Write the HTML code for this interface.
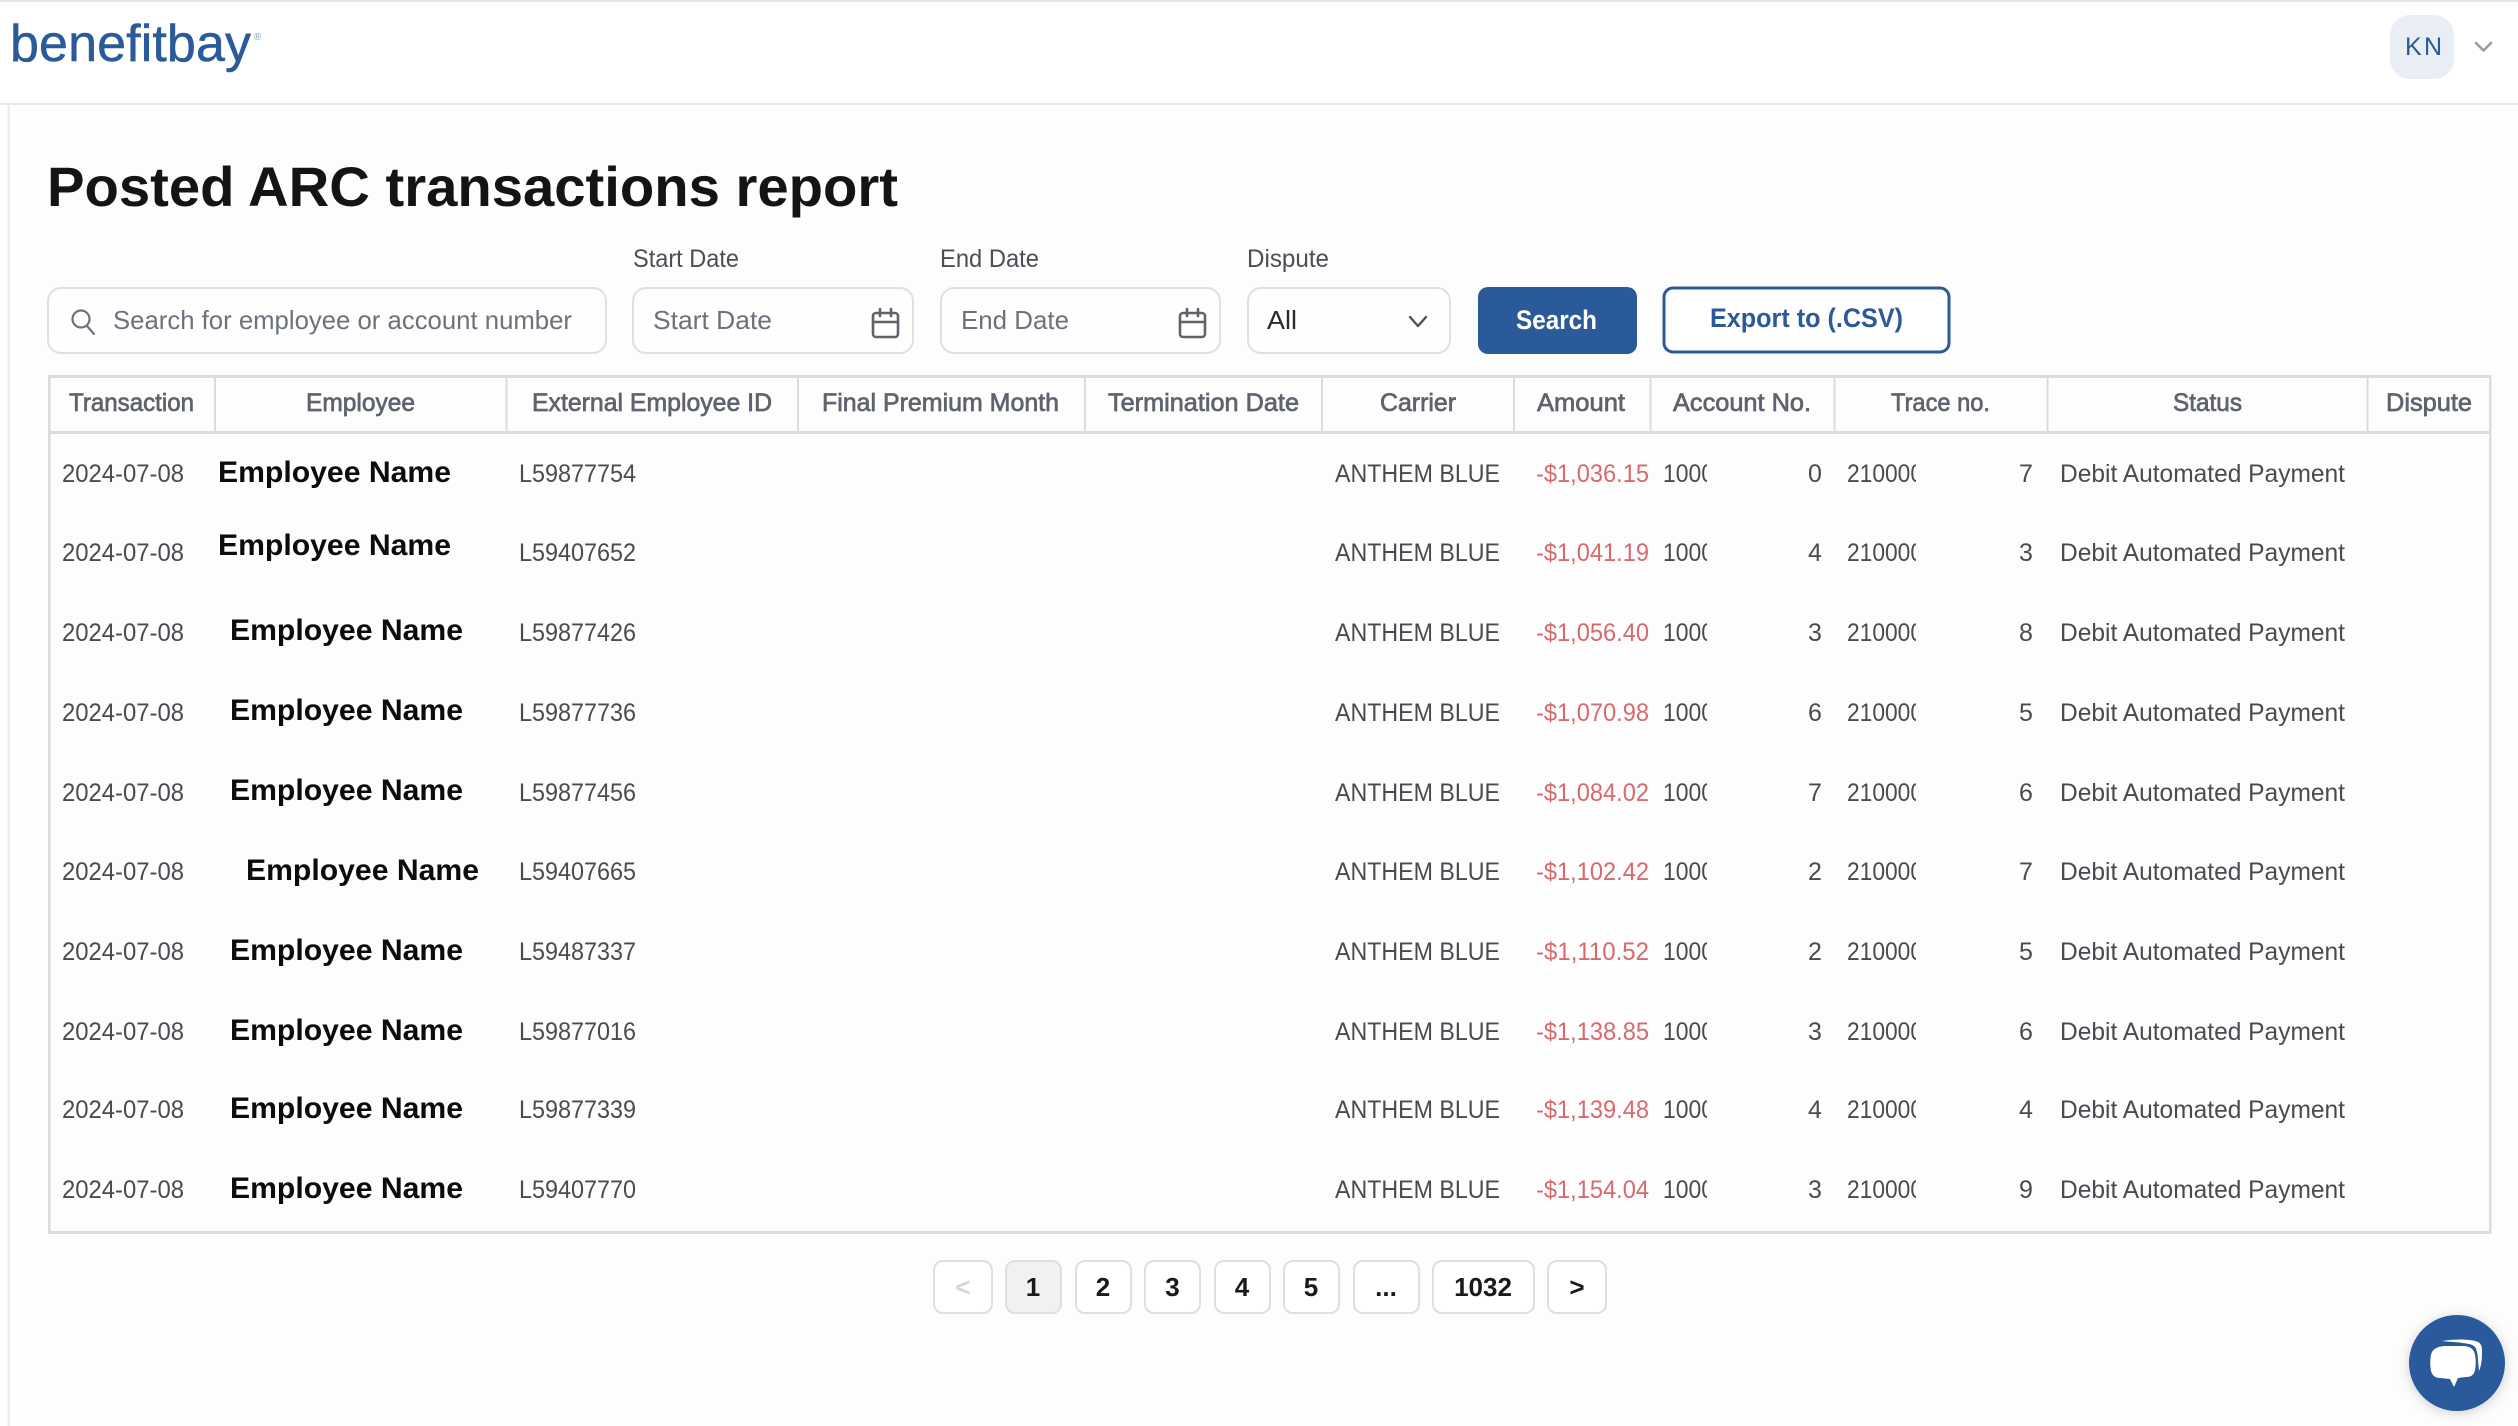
<!DOCTYPE html>
<html lang="en"><head><meta charset="utf-8"><title>Posted ARC transactions report</title>
<style>
html,body{margin:0;padding:0;background:#fdfdfd;width:2518px;height:1426px;overflow:hidden}
svg{display:block;position:absolute;left:0;top:0}
text{font-family:"Liberation Sans",sans-serif;white-space:pre}
.h{font-size:25px;fill:#5f636e;stroke:#5f636e;stroke-width:.7px}
.d{font-size:25px;fill:#4a4b50}
.r{font-size:25px;fill:#d8696d}
.n{font-size:30px;font-weight:700;fill:#0c0c0e}
.l{font-size:25px;fill:#4c4e55}
.p{font-size:26px;fill:#6c717c}
.g{font-size:26px;font-weight:700;fill:#1a1a1c}
.pg{fill:#fff;stroke:#dfdfdf;stroke-width:2}
.i{fill:none;stroke:#5f636b;stroke-width:2.6;stroke-linecap:round;stroke-linejoin:round}
.box{fill:#fefefe;stroke:#e0e0e0;stroke-width:2}
</style></head><body>
<svg width="2518" height="1426" viewBox="0 0 2518 1426" xmlns="http://www.w3.org/2000/svg">
<defs><filter id="s" x="-30%" y="-30%" width="160%" height="160%"><feDropShadow dx="0" dy="2" stdDeviation="6" flood-color="#000" flood-opacity=".18"/></filter></defs>
<rect width="2518" height="1426" fill="#fdfdfd"/>
<rect width="2518" height="104" fill="#fff"/>
<rect width="2518" height="2" fill="#e6e6ea"/>
<rect y="103" width="2518" height="2" fill="#e8e8ee"/>
<rect y="105" width="8" height="1321" fill="#fff"/>
<rect x="7.500" y="105" width="2" height="1321" fill="#e8e8ee"/>

<!-- logo -->
<text x="10" y="61" font-size="52" fill="#2b5a9b" stroke="#2b5a9b" stroke-width=".5" textLength="241" lengthAdjust="spacing" style="font-variant-ligatures:none">benefitbay</text>
<text x="254" y="40" font-size="10" fill="#7f9cc4">®</text>

<!-- avatar -->
<rect x="2390" y="15" width="64" height="64" rx="20" fill="#e8eef3"/>
<text x="2405" y="55" font-size="25" fill="#2b5a9b" textLength="37">KN</text>
<path d="M2476 43l7.500 7.500 7.500-7.500" fill="none" stroke="#9a9ca5" stroke-width="2.600" stroke-linecap="round" stroke-linejoin="round"/>

<!-- title -->
<text x="47" y="206" font-size="56" font-weight="700" fill="#141416" textLength="851" lengthAdjust="spacingAndGlyphs">Posted ARC transactions report</text>

<!-- labels -->
<text class="l" x="633" y="267" textLength="106" lengthAdjust="spacingAndGlyphs">Start Date</text>
<text class="l" x="940" y="267" textLength="99" lengthAdjust="spacingAndGlyphs">End Date</text>
<text class="l" x="1247" y="267" textLength="82" lengthAdjust="spacingAndGlyphs">Dispute</text>

<!-- inputs -->
<rect class="box" x="48" y="288" width="558" height="65" rx="13"/>
<circle cx="81" cy="319" r="8.500" fill="none" stroke="#6c717c" stroke-width="2.200"/>
<path d="M87 326l7 8" fill="none" stroke="#6c717c" stroke-width="2.200" stroke-linecap="round"/>
<text class="p" x="113" y="329" textLength="459" lengthAdjust="spacingAndGlyphs">Search for employee or account number</text>

<rect class="box" x="633" y="288" width="280" height="65" rx="13"/>
<text class="p" x="653" y="329" textLength="119" lengthAdjust="spacingAndGlyphs">Start Date</text>
<g class="i"><rect x="873" y="313" width="25" height="24" rx="3"/><path d="M873 322h25M880 309v7M891 309v7"/></g>

<rect class="box" x="941" y="288" width="279" height="65" rx="13"/>
<text class="p" x="961" y="329" textLength="108" lengthAdjust="spacingAndGlyphs">End Date</text>
<g class="i"><rect x="1180" y="313" width="25" height="24" rx="3"/><path d="M1180 322h25M1187 309v7M1198 309v7"/></g>

<rect class="box" x="1248" y="288" width="202" height="65" rx="13"/>
<text x="1267" y="329" font-size="26" fill="#2a2a2e" textLength="30" lengthAdjust="spacingAndGlyphs">All</text>
<path d="M1410 317l8 9 8-9" fill="none" stroke="#4f5259" stroke-width="2.400" stroke-linecap="round" stroke-linejoin="round"/>

<!-- buttons -->
<rect x="1478" y="287" width="159" height="67" rx="10" fill="#2b5a9b"/>
<text x="1516" y="329" font-size="27" font-weight="700" fill="#fff" textLength="81" lengthAdjust="spacingAndGlyphs">Search</text>
<rect x="1664" y="288" width="285" height="64" rx="9" fill="#fff" stroke="#2b5a9b" stroke-width="3"/>
<text x="1710" y="327" font-size="27" font-weight="700" fill="#2b5a9b" textLength="193" lengthAdjust="spacingAndGlyphs">Export to (.CSV)</text>

<!-- table frame -->
<rect x="48" y="375" width="2443" height="3" fill="#dcdcdc"/>
<rect x="48" y="431" width="2443" height="3" fill="#dcdcdc"/>
<rect x="48" y="1231" width="2443" height="3" fill="#dcdcdc"/>
<rect x="48" y="375" width="2.500" height="859" fill="#dcdcdc"/>
<rect x="2489" y="375" width="2.500" height="859" fill="#dcdcdc"/>
<g fill="#dcdcdc">
<rect x="214" y="375" width="2" height="58"/><rect x="505.500" y="375" width="2" height="58"/><rect x="797" y="375" width="2" height="58"/><rect x="1084" y="375" width="2" height="58"/><rect x="1321" y="375" width="2" height="58"/><rect x="1513" y="375" width="2" height="58"/><rect x="1649.500" y="375" width="2" height="58"/><rect x="1833.500" y="375" width="2" height="58"/><rect x="2046.500" y="375" width="2" height="58"/><rect x="2366.500" y="375" width="2" height="58"/>
</g>

<!-- headers -->
<text class="h" x="69" y="411" textLength="125" lengthAdjust="spacingAndGlyphs">Transaction</text>
<text class="h" x="306" y="411" textLength="109" lengthAdjust="spacingAndGlyphs">Employee</text>
<text class="h" x="532" y="411" textLength="240" lengthAdjust="spacingAndGlyphs">External Employee ID</text>
<text class="h" x="822" y="411" textLength="237" lengthAdjust="spacingAndGlyphs">Final Premium Month</text>
<text class="h" x="1108" y="411" textLength="191" lengthAdjust="spacingAndGlyphs">Termination Date</text>
<text class="h" x="1380" y="411" textLength="76" lengthAdjust="spacingAndGlyphs">Carrier</text>
<text class="h" x="1537" y="411" textLength="88" lengthAdjust="spacingAndGlyphs">Amount</text>
<text class="h" x="1673" y="411" textLength="138" lengthAdjust="spacingAndGlyphs">Account No.</text>
<text class="h" x="1891" y="411" textLength="99" lengthAdjust="spacingAndGlyphs">Trace no.</text>
<text class="h" x="2173" y="411" textLength="69" lengthAdjust="spacingAndGlyphs">Status</text>
<text class="h" x="2386" y="411" textLength="86" lengthAdjust="spacingAndGlyphs">Dispute</text>

<!-- row 1 -->
<g>
<text class="d" x="62" y="482" textLength="122" lengthAdjust="spacingAndGlyphs">2024-07-08</text>
<text class="n" x="218" y="482" textLength="233" lengthAdjust="spacingAndGlyphs">Employee Name</text>
<text class="d" x="519" y="482" textLength="117" lengthAdjust="spacingAndGlyphs">L59877754</text>
<text class="d" x="1335" y="482" textLength="165" lengthAdjust="spacingAndGlyphs">ANTHEM BLUE</text>
<text class="r" x="1536" y="482" textLength="113" lengthAdjust="spacingAndGlyphs">-$1,036.15</text>
<text class="d" x="1663" y="482" textLength="51" lengthAdjust="spacingAndGlyphs">1000</text><rect x="1707" y="455" width="90" height="36" fill="#fdfdfd"/><text class="d" x="1808" y="482">0</text>
<text class="d" x="1847" y="482" textLength="76" lengthAdjust="spacingAndGlyphs">210000</text><rect x="1916" y="455" width="90" height="36" fill="#fdfdfd"/><text class="d" x="2019" y="482">7</text>
<text class="d" x="2060" y="482" textLength="285" lengthAdjust="spacingAndGlyphs">Debit Automated Payment</text>
</g>
<!-- row 2 -->
<g>
<text class="d" x="62" y="561" textLength="122" lengthAdjust="spacingAndGlyphs">2024-07-08</text>
<text class="n" x="218" y="555" textLength="233" lengthAdjust="spacingAndGlyphs">Employee Name</text>
<text class="d" x="519" y="561" textLength="117" lengthAdjust="spacingAndGlyphs">L59407652</text>
<text class="d" x="1335" y="561" textLength="165" lengthAdjust="spacingAndGlyphs">ANTHEM BLUE</text>
<text class="r" x="1536" y="561" textLength="113" lengthAdjust="spacingAndGlyphs">-$1,041.19</text>
<text class="d" x="1663" y="561" textLength="51" lengthAdjust="spacingAndGlyphs">1000</text><rect x="1707" y="534" width="90" height="36" fill="#fdfdfd"/><text class="d" x="1808" y="561">4</text>
<text class="d" x="1847" y="561" textLength="76" lengthAdjust="spacingAndGlyphs">210000</text><rect x="1916" y="534" width="90" height="36" fill="#fdfdfd"/><text class="d" x="2019" y="561">3</text>
<text class="d" x="2060" y="561" textLength="285" lengthAdjust="spacingAndGlyphs">Debit Automated Payment</text>
</g>
<!-- row 3 -->
<g>
<text class="d" x="62" y="641" textLength="122" lengthAdjust="spacingAndGlyphs">2024-07-08</text>
<text class="n" x="230" y="640" textLength="233" lengthAdjust="spacingAndGlyphs">Employee Name</text>
<text class="d" x="519" y="641" textLength="117" lengthAdjust="spacingAndGlyphs">L59877426</text>
<text class="d" x="1335" y="641" textLength="165" lengthAdjust="spacingAndGlyphs">ANTHEM BLUE</text>
<text class="r" x="1536" y="641" textLength="113" lengthAdjust="spacingAndGlyphs">-$1,056.40</text>
<text class="d" x="1663" y="641" textLength="51" lengthAdjust="spacingAndGlyphs">1000</text><rect x="1707" y="614" width="90" height="36" fill="#fdfdfd"/><text class="d" x="1808" y="641">3</text>
<text class="d" x="1847" y="641" textLength="76" lengthAdjust="spacingAndGlyphs">210000</text><rect x="1916" y="614" width="90" height="36" fill="#fdfdfd"/><text class="d" x="2019" y="641">8</text>
<text class="d" x="2060" y="641" textLength="285" lengthAdjust="spacingAndGlyphs">Debit Automated Payment</text>
</g>
<!-- row 4 -->
<g>
<text class="d" x="62" y="721" textLength="122" lengthAdjust="spacingAndGlyphs">2024-07-08</text>
<text class="n" x="230" y="720" textLength="233" lengthAdjust="spacingAndGlyphs">Employee Name</text>
<text class="d" x="519" y="721" textLength="117" lengthAdjust="spacingAndGlyphs">L59877736</text>
<text class="d" x="1335" y="721" textLength="165" lengthAdjust="spacingAndGlyphs">ANTHEM BLUE</text>
<text class="r" x="1536" y="721" textLength="113" lengthAdjust="spacingAndGlyphs">-$1,070.98</text>
<text class="d" x="1663" y="721" textLength="51" lengthAdjust="spacingAndGlyphs">1000</text><rect x="1707" y="694" width="90" height="36" fill="#fdfdfd"/><text class="d" x="1808" y="721">6</text>
<text class="d" x="1847" y="721" textLength="76" lengthAdjust="spacingAndGlyphs">210000</text><rect x="1916" y="694" width="90" height="36" fill="#fdfdfd"/><text class="d" x="2019" y="721">5</text>
<text class="d" x="2060" y="721" textLength="285" lengthAdjust="spacingAndGlyphs">Debit Automated Payment</text>
</g>
<!-- row 5 -->
<g>
<text class="d" x="62" y="801" textLength="122" lengthAdjust="spacingAndGlyphs">2024-07-08</text>
<text class="n" x="230" y="800" textLength="233" lengthAdjust="spacingAndGlyphs">Employee Name</text>
<text class="d" x="519" y="801" textLength="117" lengthAdjust="spacingAndGlyphs">L59877456</text>
<text class="d" x="1335" y="801" textLength="165" lengthAdjust="spacingAndGlyphs">ANTHEM BLUE</text>
<text class="r" x="1536" y="801" textLength="113" lengthAdjust="spacingAndGlyphs">-$1,084.02</text>
<text class="d" x="1663" y="801" textLength="51" lengthAdjust="spacingAndGlyphs">1000</text><rect x="1707" y="774" width="90" height="36" fill="#fdfdfd"/><text class="d" x="1808" y="801">7</text>
<text class="d" x="1847" y="801" textLength="76" lengthAdjust="spacingAndGlyphs">210000</text><rect x="1916" y="774" width="90" height="36" fill="#fdfdfd"/><text class="d" x="2019" y="801">6</text>
<text class="d" x="2060" y="801" textLength="285" lengthAdjust="spacingAndGlyphs">Debit Automated Payment</text>
</g>
<!-- row 6 -->
<g>
<text class="d" x="62" y="880" textLength="122" lengthAdjust="spacingAndGlyphs">2024-07-08</text>
<text class="n" x="246" y="880" textLength="233" lengthAdjust="spacingAndGlyphs">Employee Name</text>
<text class="d" x="519" y="880" textLength="117" lengthAdjust="spacingAndGlyphs">L59407665</text>
<text class="d" x="1335" y="880" textLength="165" lengthAdjust="spacingAndGlyphs">ANTHEM BLUE</text>
<text class="r" x="1536" y="880" textLength="113" lengthAdjust="spacingAndGlyphs">-$1,102.42</text>
<text class="d" x="1663" y="880" textLength="51" lengthAdjust="spacingAndGlyphs">1000</text><rect x="1707" y="853" width="90" height="36" fill="#fdfdfd"/><text class="d" x="1808" y="880">2</text>
<text class="d" x="1847" y="880" textLength="76" lengthAdjust="spacingAndGlyphs">210000</text><rect x="1916" y="853" width="90" height="36" fill="#fdfdfd"/><text class="d" x="2019" y="880">7</text>
<text class="d" x="2060" y="880" textLength="285" lengthAdjust="spacingAndGlyphs">Debit Automated Payment</text>
</g>
<!-- row 7 -->
<g>
<text class="d" x="62" y="960" textLength="122" lengthAdjust="spacingAndGlyphs">2024-07-08</text>
<text class="n" x="230" y="960" textLength="233" lengthAdjust="spacingAndGlyphs">Employee Name</text>
<text class="d" x="519" y="960" textLength="117" lengthAdjust="spacingAndGlyphs">L59487337</text>
<text class="d" x="1335" y="960" textLength="165" lengthAdjust="spacingAndGlyphs">ANTHEM BLUE</text>
<text class="r" x="1536" y="960" textLength="113" lengthAdjust="spacingAndGlyphs">-$1,110.52</text>
<text class="d" x="1663" y="960" textLength="51" lengthAdjust="spacingAndGlyphs">1000</text><rect x="1707" y="933" width="90" height="36" fill="#fdfdfd"/><text class="d" x="1808" y="960">2</text>
<text class="d" x="1847" y="960" textLength="76" lengthAdjust="spacingAndGlyphs">210000</text><rect x="1916" y="933" width="90" height="36" fill="#fdfdfd"/><text class="d" x="2019" y="960">5</text>
<text class="d" x="2060" y="960" textLength="285" lengthAdjust="spacingAndGlyphs">Debit Automated Payment</text>
</g>
<!-- row 8 -->
<g>
<text class="d" x="62" y="1040" textLength="122" lengthAdjust="spacingAndGlyphs">2024-07-08</text>
<text class="n" x="230" y="1040" textLength="233" lengthAdjust="spacingAndGlyphs">Employee Name</text>
<text class="d" x="519" y="1040" textLength="117" lengthAdjust="spacingAndGlyphs">L59877016</text>
<text class="d" x="1335" y="1040" textLength="165" lengthAdjust="spacingAndGlyphs">ANTHEM BLUE</text>
<text class="r" x="1536" y="1040" textLength="113" lengthAdjust="spacingAndGlyphs">-$1,138.85</text>
<text class="d" x="1663" y="1040" textLength="51" lengthAdjust="spacingAndGlyphs">1000</text><rect x="1707" y="1013" width="90" height="36" fill="#fdfdfd"/><text class="d" x="1808" y="1040">3</text>
<text class="d" x="1847" y="1040" textLength="76" lengthAdjust="spacingAndGlyphs">210000</text><rect x="1916" y="1013" width="90" height="36" fill="#fdfdfd"/><text class="d" x="2019" y="1040">6</text>
<text class="d" x="2060" y="1040" textLength="285" lengthAdjust="spacingAndGlyphs">Debit Automated Payment</text>
</g>
<!-- row 9 -->
<g>
<text class="d" x="62" y="1118" textLength="122" lengthAdjust="spacingAndGlyphs">2024-07-08</text>
<text class="n" x="230" y="1118" textLength="233" lengthAdjust="spacingAndGlyphs">Employee Name</text>
<text class="d" x="519" y="1118" textLength="117" lengthAdjust="spacingAndGlyphs">L59877339</text>
<text class="d" x="1335" y="1118" textLength="165" lengthAdjust="spacingAndGlyphs">ANTHEM BLUE</text>
<text class="r" x="1536" y="1118" textLength="113" lengthAdjust="spacingAndGlyphs">-$1,139.48</text>
<text class="d" x="1663" y="1118" textLength="51" lengthAdjust="spacingAndGlyphs">1000</text><rect x="1707" y="1091" width="90" height="36" fill="#fdfdfd"/><text class="d" x="1808" y="1118">4</text>
<text class="d" x="1847" y="1118" textLength="76" lengthAdjust="spacingAndGlyphs">210000</text><rect x="1916" y="1091" width="90" height="36" fill="#fdfdfd"/><text class="d" x="2019" y="1118">4</text>
<text class="d" x="2060" y="1118" textLength="285" lengthAdjust="spacingAndGlyphs">Debit Automated Payment</text>
</g>
<!-- row 10 -->
<g>
<text class="d" x="62" y="1198" textLength="122" lengthAdjust="spacingAndGlyphs">2024-07-08</text>
<text class="n" x="230" y="1198" textLength="233" lengthAdjust="spacingAndGlyphs">Employee Name</text>
<text class="d" x="519" y="1198" textLength="117" lengthAdjust="spacingAndGlyphs">L59407770</text>
<text class="d" x="1335" y="1198" textLength="165" lengthAdjust="spacingAndGlyphs">ANTHEM BLUE</text>
<text class="r" x="1536" y="1198" textLength="113" lengthAdjust="spacingAndGlyphs">-$1,154.04</text>
<text class="d" x="1663" y="1198" textLength="51" lengthAdjust="spacingAndGlyphs">1000</text><rect x="1707" y="1171" width="90" height="36" fill="#fdfdfd"/><text class="d" x="1808" y="1198">3</text>
<text class="d" x="1847" y="1198" textLength="76" lengthAdjust="spacingAndGlyphs">210000</text><rect x="1916" y="1171" width="90" height="36" fill="#fdfdfd"/><text class="d" x="2019" y="1198">9</text>
<text class="d" x="2060" y="1198" textLength="285" lengthAdjust="spacingAndGlyphs">Debit Automated Payment</text>
</g>

<!-- pagination -->
<rect class="pg" x="934" y="1261" width="58" height="52" rx="9"/>
<text class="g" x="963" y="1296" text-anchor="middle" style="fill:#d6d6d6">&lt;</text>
<rect class="pg" x="1006" y="1261" width="55" height="52" rx="9" style="fill:#eff1f3"/>
<text class="g" x="1033" y="1296" text-anchor="middle">1</text>
<rect class="pg" x="1076" y="1261" width="55" height="52" rx="9"/>
<text class="g" x="1103" y="1296" text-anchor="middle">2</text>
<rect class="pg" x="1145" y="1261" width="55" height="52" rx="9"/>
<text class="g" x="1172.500" y="1296" text-anchor="middle">3</text>
<rect class="pg" x="1215" y="1261" width="55" height="52" rx="9"/>
<text class="g" x="1242" y="1296" text-anchor="middle">4</text>
<rect class="pg" x="1284" y="1261" width="55" height="52" rx="9"/>
<text class="g" x="1311" y="1296" text-anchor="middle">5</text>
<rect class="pg" x="1354" y="1261" width="65" height="52" rx="9"/>
<text class="g" x="1386" y="1296" text-anchor="middle">...</text>
<rect class="pg" x="1433" y="1261" width="101" height="52" rx="9"/>
<text class="g" x="1483" y="1296" text-anchor="middle">1032</text>
<rect class="pg" x="1548" y="1261" width="58" height="52" rx="9"/>
<text class="g" x="1577" y="1296" text-anchor="middle">&gt;</text>

<!-- chat -->
<circle cx="2457" cy="1363" r="48" fill="#2b5a9b" filter="url(#s)"/>
<path d="M2442 1341c12-2 26-2 33 0 5 1 7 4 7 9 0 7 0 14-3 21-1-9-1-15-2-19-1-5-3-7-8-8-9-2-19-2-27-3z" fill="#fff"/>
<path d="M2446 1346h17c7 0 11 3 12 9 1 5 1 10 0 15-1 5-4 7-9 7l-8 1-4 9-4-8-10-1c-5 0-8-3-9-7-1-6-1-11 0-16 1-6 7-9 15-9z" fill="#fff"/>
</svg>
</body></html>
